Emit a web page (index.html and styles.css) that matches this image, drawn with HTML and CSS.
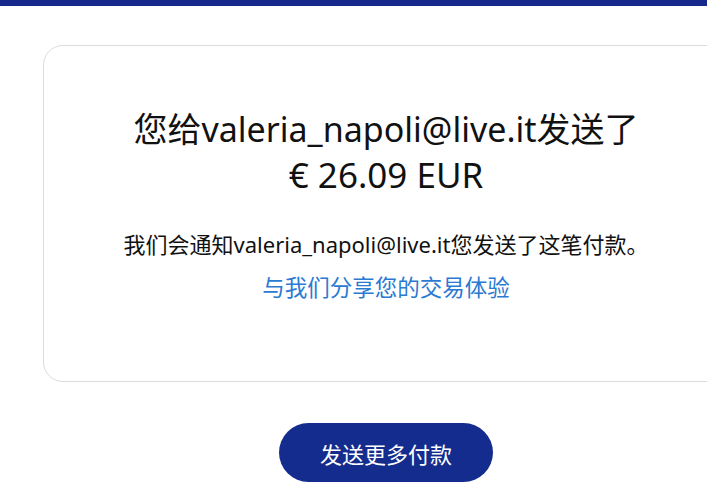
FILE: index.html
```html
<!DOCTYPE html>
<html lang="zh">
<head>
    <meta charset="UTF-8">
    <meta name="viewport" content="width=device-width, initial-scale=1.0">
    <title>付款已发送</title>
    <link rel="stylesheet" href="styles.css">
</head>
<body>
    <div class="top_bar"></div>
    <div class="page">
        <div class="card">
            <h1 class="title">您给valeria_napoli@live.it发送了<br><span class="amount">€ 26.09 EUR</span></h1>
            <p class="note">我们会通知valeria_napoli@live.it您发送了这笔付款。</p>
            <a class="share" href="#">与我们分享您的交易体验</a>
        </div>
        <div class="actions">
            <button class="more">发送更多付款</button>
        </div>
    </div>
</body>
</html>
```

FILE: styles.css
```css
html, body {
    margin: 0;
    padding: 0;
    background: #ffffff;
    overflow: hidden;
    font-family: "Noto Sans", "Noto Sans CJK SC", sans-serif;
    color: #111111;
}
.top_bar {
    height: 6px;
    background-color: #16298a;
}
.page {
    width: 686px;
    margin-left: 43px;
    padding-top: 39px;
}
.card {
    box-sizing: border-box;
    height: 337px;
    border: 1px solid #dcdcdc;
    border-radius: 20px;
    padding-top: 61px;
    text-align: center;
}
.title {
    margin: 0;
    font-size: 34px;
    font-weight: 400;
    line-height: 45px;
}
.amount {
    font-size: 35px;
}
.note {
    margin: 32px 0 0;
    font-size: 22px;
    line-height: 28px;
}
.share {
    display: inline-block;
    margin-top: 16px;
    font-size: 22.5px;
    line-height: 28px;
    color: #2a7ad2;
    text-decoration: none;
}
.actions {
    display: flex;
    justify-content: center;
    padding-top: 41px;
}
.more {
    width: 214px;
    height: 59px;
    border: none;
    border-radius: 30px;
    background-color: #142c8e;
    color: #ffffff;
    font-family: inherit;
    font-size: 22px;
    cursor: pointer;
}
```
